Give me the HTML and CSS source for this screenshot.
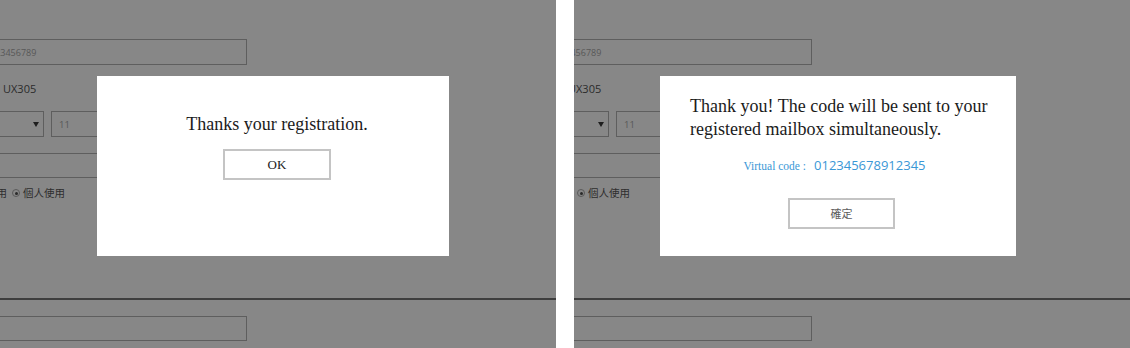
FILE: index.html
```html
<!DOCTYPE html>
<html lang="zh-Hant">
<head>
<meta charset="utf-8">
<title>Registration dialogs</title>
<link rel="stylesheet" href="styles.css">
</head>
<body>
  <section class="panel panel-left">
    <div class="page">
      <div class="field input-wide"><span class="ph">123456789</span></div>
      <div class="model">UX305</div>
      <div class="select-row">
        <div class="field select"><span class="arrow"></span></div>
        <div class="field small"><span class="ph">11</span></div>
      </div>
      <div class="field input-wide plain"></div>
      <div class="radio-row">
        <span class="radio"></span><span>公司使用</span>
        <span class="radio checked"></span><span>個人使用</span>
      </div>
      <div class="rule"></div>
      <div class="field input-wide plain bottom"></div>
    </div>
    <div class="modal modal-a">
      <p class="msg msg-center">Thanks your registration.</p>
      <button class="btn btn-ok">OK</button>
    </div>
  </section>

  <section class="panel panel-right">
    <div class="page">
      <div class="field input-wide"><span class="ph">123456789</span></div>
      <div class="model">UX305</div>
      <div class="select-row">
        <div class="field select"><span class="arrow"></span></div>
        <div class="field small"><span class="ph">11</span></div>
      </div>
      <div class="field input-wide plain"></div>
      <div class="radio-row">
        <span class="radio"></span><span>公司使用</span>
        <span class="radio checked"></span><span>個人使用</span>
      </div>
      <div class="rule"></div>
      <div class="field input-wide plain bottom"></div>
    </div>
    <div class="modal modal-b">
      <p class="msg msg-left">Thank you! The code will be sent to your registered mailbox simultaneously.</p>
      <div class="code-line">
        <span class="code-label">Virtual code :</span>
        <span class="code-value">012345678912345</span>
      </div>
      <button class="btn btn-confirm">確定</button>
    </div>
  </section>
</body>
</html>
```

FILE: styles.css
```css
* { box-sizing: border-box; }

html, body {
  margin: 0;
  padding: 0;
}

body {
  width: 1130px;
  height: 348px;
  background: #ffffff;
  display: flex;
  gap: 18px;
  overflow: hidden;
}

.panel {
  position: relative;
  width: 556px;
  height: 348px;
  flex: 0 0 556px;
  overflow: hidden;
  background: #878787;
}

.page {
  width: 900px;
  padding-top: 39px;
  font-family: "Open Sans", "Noto Sans CJK TC", sans-serif;
  color: #2c2c2c;
}

.panel-left .page { margin-left: -60px; }
.panel-right .page { margin-left: -69px; }

.field {
  border: 1px solid #5e5e5e;
  height: 26px;
  display: flex;
  align-items: center;
}

.input-wide {
  margin-left: 42px;
  width: 265px;
  padding-left: 7px;
}

.input-wide.plain { height: 25px; margin-top: 16px; }

.ph {
  font-size: 9px;
  color: #575757;
}

.model {
  margin-top: 16px;
  height: 16px;
  line-height: 16px;
  padding-left: 63px;
  font-size: 11px;
  color: #2b2b2b;
}

.select-row {
  margin-top: 14px;
  padding-left: 42px;
  display: flex;
  gap: 7px;
}

.select {
  width: 62px;
  justify-content: flex-end;
  padding-right: 4px;
}

.arrow {
  width: 0;
  height: 0;
  border-left: 3px solid transparent;
  border-right: 3px solid transparent;
  border-top: 5px solid #1e1e1e;
}

.small {
  width: 130px;
  padding-left: 7px;
}

.small .ph { font-size: 9.5px; }

.radio-row {
  margin-top: 8px;
  height: 14px;
  display: flex;
  align-items: center;
  gap: 3px;
  padding-left: 12px;
  font-size: 10.5px;
  line-height: 14px;
  color: #2e2e2e;
}

.radio {
  width: 8px;
  height: 8px;
  border: 1px solid #5a5a5a;
  border-radius: 50%;
  margin-left: 2px;
  display: inline-flex;
  align-items: center;
  justify-content: center;
}

.radio.checked::after {
  content: "";
  width: 3px;
  height: 3px;
  border-radius: 50%;
  background: #2a2a2a;
}

.rule {
  margin-top: 98px;
  height: 2px;
  background: #3e3e3e;
}

.bottom { margin-top: 16px; }

.modal {
  position: absolute;
  top: 76px;
  height: 180px;
  background: #ffffff;
  display: flex;
  flex-direction: column;
  align-items: center;
  font-family: "Liberation Serif", "Times New Roman", serif;
  color: #1b1b1b;
}

.modal-a {
  left: 97px;
  width: 352px;
  padding: 37px 0 0 8px;
}

.modal-b {
  left: 86px;
  width: 356px;
  padding-top: 19px;
}

.msg {
  margin: 0;
  font-size: 18px;
  line-height: 23.4px;
}

.msg-center { text-align: center; }

.msg-left {
  align-self: stretch;
  padding: 0 18px 0 30px;
  text-align: left;
}

.btn {
  width: 108px;
  height: 31px;
  border: 2px solid #c4c4c4;
  background: #ffffff;
  padding: 0;
  display: flex;
  align-items: center;
  justify-content: center;
}

.btn-ok {
  margin-top: 13px;
  font-family: "Liberation Serif", "Times New Roman", serif;
  font-size: 13px;
  color: #1b1b1b;
}

.code-line {
  margin-top: 14px;
  margin-right: 7px;
  height: 20px;
  display: flex;
  align-items: baseline;
  gap: 8px;
  color: #3a97d6;
}

.code-label {
  font-family: "Liberation Serif", "Times New Roman", serif;
  font-size: 11.5px;
}

.code-value {
  font-family: "Open Sans", sans-serif;
  font-size: 13px;
}

.btn-confirm {
  margin-top: 22px;
  margin-left: 7px;
  width: 107px;
  font-family: "Noto Sans CJK TC", sans-serif;
  font-size: 11px;
  color: #5c5c5c;
}
```
